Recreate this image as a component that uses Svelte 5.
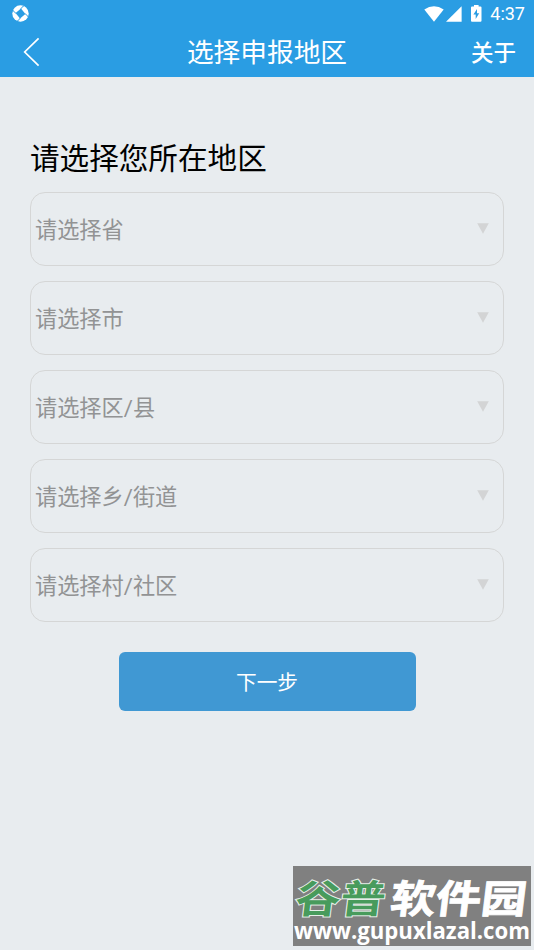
<!--
    Region picker: the first step of the declaration form.
-->

<script>
    const fields = [
        { key: 'province', label: '请选择省' },
        { key: 'city', label: '请选择市' },
        { key: 'county', label: '请选择区/县' },
        { key: 'street', label: '请选择乡/街道' },
        { key: 'village', label: '请选择村/社区' }
    ];
</script>

<div class="screen">
    <div class="statusbar">
        <svg class="app" width="17" height="17" viewBox="0 0 17 17">
            <circle cx="8.5" cy="8.5" r="8.2" fill="#fff" />
            <path d="M9 3.6 13.4 9 8 13.4 3.6 8Z" fill="#2a9de3" />
            <g fill="none" stroke="#2a9de3" stroke-width="0.9">
                <path d="M8.6 4.2Q9.6 2 12 0.8" />
                <path d="M12.8 8.6Q15 9.6 16.2 12" />
                <path d="M8.4 12.8Q7.4 15 5 16.2" />
                <path d="M4.2 8.4Q2 7.4 0.8 5" />
            </g>
        </svg>
        <div class="system">
            <svg width="20" height="16" viewBox="0 0 20 16">
                <path d="M0.3 3.6Q10 -3.2 19.7 3.6L10 15.8Z" fill="#fff" />
            </svg>
            <svg class="signal" width="16" height="16" viewBox="0 0 16 16">
                <path d="M15.6 0.2V15.8H0Z" fill="#fff" />
            </svg>
            <svg class="battery" width="11" height="17" viewBox="0 0 11 17">
                <path d="M3 0H7.6V1.6H9.5Q10.5 1.6 10.5 2.6V15.8Q10.5 16.8 9.5 16.8H1Q0 16.8 0 15.8V2.6Q0 1.6 1 1.6H3Z" fill="#fff" />
                <path d="M6 4 2.4 9.6H4.7V14L8.2 8.3H6Z" fill="#2a9de3" />
            </svg>
            <span class="time">4:37</span>
        </div>
    </div>

    <header>
        <button class="back" aria-label="返回">
            <svg width="17" height="30" viewBox="0 0 17 30">
                <path d="M15.6 1.4 1.7 15 15.6 28.6" fill="none" stroke="#fff" stroke-width="1.7" />
            </svg>
        </button>
        <h1>选择申报地区</h1>
        <button class="about">关于</button>
    </header>

    <main>
        <h2>请选择您所在地区</h2>
        <div class="fields">
            {#each fields as field (field.key)}
                <button class="field">
                    <span>{field.label}</span>
                    <svg width="12" height="11" viewBox="0 0 12 11">
                        <path d="M0.2 0.3H11.8L6 10.8Z" fill="#d3d4d5" />
                    </svg>
                </button>
            {/each}
        </div>
        <button class="next">下一步</button>
    </main>

    <div class="watermark">
        <svg width="238" height="84" viewBox="0 0 238 84">
            <g transform="translate(-1 46.5) skewX(-7)" class="brand">
                <text class="green" x="2" y="0" textLength="90" lengthAdjust="spacingAndGlyphs">谷普</text>
                <text class="white" x="97" y="0" textLength="136" lengthAdjust="spacingAndGlyphs">软件园</text>
            </g>
            <text class="url" x="1" y="72.5" textLength="236" lengthAdjust="spacingAndGlyphs">www.gupuxlazal.com</text>
        </svg>
    </div>
</div>

<style>
    :global(body){
        margin: 0;
        background-color: #e8ecef;
    }

    .screen{
        position: relative;
        height: 950px;
        background-color: #e8ecef;
        font-family: Roboto, "Noto Sans CJK SC", sans-serif;
    }

    button{
        margin: 0;
        padding: 0;
        border: none;
        background: none;
        font-family: inherit;
    }

    svg{display: block;}

    .statusbar{
        display: flex;
        justify-content: space-between;
        align-items: center;
        box-sizing: border-box;
        height: 27px;
        padding: 0 9px 0 12px;
        background-color: #2a9de3;
    }

    .system{
        display: flex;
        align-items: center;
    }

    .signal{margin-left: 2px;}

    .battery{margin-left: 9px;}

    .time{
        margin-left: 8px;
        color: #fff;
        font-size: 18px;
        line-height: 27px;
    }

    header{
        display: grid;
        grid-template-columns: 1fr auto 1fr;
        align-items: center;
        box-sizing: border-box;
        height: 50px;
        padding: 0 18px 0 23px;
        background-color: #2a9de3;
        color: #fff;
    }

    .about{
        justify-self: end;
        padding-top: 2px;
        color: #fff;
        font-size: 22.5px;
        font-weight: 500;
        line-height: 48px;
    }

    h1{
        margin: 0 0 0 -5px;
        padding-top: 2px;
        font-size: 26.7px;
        font-weight: 400;
        line-height: 48px;
    }

    main{
        display: flex;
        flex-direction: column;
        padding: 61px 30px 0;
    }

    h2{
        margin: 0;
        color: #000;
        font-size: 29.6px;
        font-weight: 400;
        line-height: 42px;
    }

    .fields{
        display: flex;
        flex-direction: column;
        gap: 15px;
        margin-top: 11.5px;
    }

    .field{
        display: flex;
        justify-content: space-between;
        align-items: center;
        box-sizing: border-box;
        height: 74.1px;
        padding: 0 14px 0 4px;
        border: 1.4px solid #d5d6d6;
        border-radius: 15px;
        color: #929394;
        font-size: 22.2px;
    }

    .field span{padding-bottom: 2px;}

    .next{
        align-self: center;
        width: 297px;
        height: 59px;
        margin-top: 30px;
        border-radius: 6px;
        background-color: #4098d3;
        color: #fff;
        font-size: 20.7px;
    }

    .watermark{
        position: absolute;
        left: 293px;
        top: 866px;
        width: 238px;
        height: 80px;
        background-color: #808080;
    }

    .watermark svg{overflow: visible;}

    .brand{
        font-family: "Noto Sans CJK SC", sans-serif;
        font-size: 39px;
        font-weight: 700;
    }

    .green{
        fill: #489b5c;
        stroke: #e6eee8;
        stroke-width: 2px;
        paint-order: stroke;
    }

    .white{
        fill: #fff;
        stroke: #fff;
        stroke-width: 0.8px;
    }

    .url{
        fill: #fff;
        font-family: "Open Sans", "Noto Sans", sans-serif;
        font-size: 23px;
        font-weight: 700;
    }
</style>
